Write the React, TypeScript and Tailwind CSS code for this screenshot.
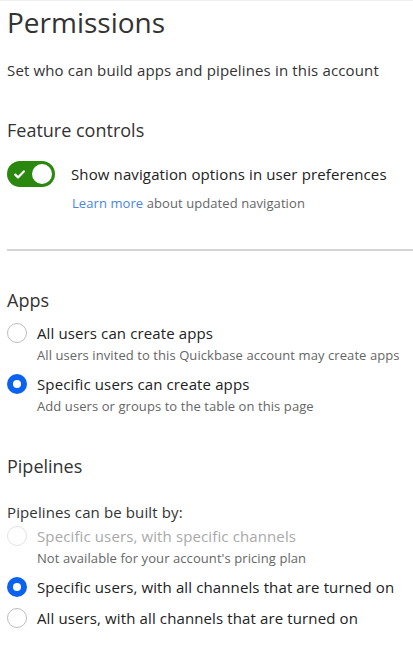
import React from "react";

function Radio({ checked, disabled }: { checked?: boolean; disabled?: boolean }) {
  if (checked) {
    return (
      <span className="flex h-[20px] w-[20px] shrink-0 items-center justify-center rounded-full bg-[#0b62ef]">
        <span className="h-[8px] w-[8px] rounded-full bg-white" />
      </span>
    );
  }
  return (
    <span
      className={
        disabled
          ? "h-[20px] w-[20px] shrink-0 rounded-full border border-[#e3e3e3] bg-white"
          : "h-[20px] w-[20px] shrink-0 rounded-full border border-[#bdbdbd] bg-white"
      }
    />
  );
}

function Option({
  label,
  desc,
  checked,
  disabled,
}: {
  label: string;
  desc?: string;
  checked?: boolean;
  disabled?: boolean;
}) {
  return (
    <div className="flex flex-col">
      <div className="flex h-[20px] items-center gap-[10px]">
        <Radio checked={checked} disabled={disabled} />
        <span
          className={
            disabled
              ? "text-[15px] leading-[20px] tracking-[0.12px] text-[#a9a9a9]"
              : "text-[15px] leading-[20px] tracking-[0.12px] text-[#222]"
          }
        >
          {label}
        </span>
      </div>
      {desc && <div className="mt-[3px] pl-[30px] text-[13px] leading-[18px] tracking-[0.08px] text-[#666]">{desc}</div>}
    </div>
  );
}

export default function App() {
  return (
    <div
      className="h-[658px] w-[413px] overflow-hidden border-t border-[#f0f0f0] bg-white pl-[7px]"
      style={{ fontFamily: "'Open Sans', Lato, sans-serif" }}
    >
      <h1 className="mt-[3px] text-[28px] leading-[36px] text-[#333]">Permissions</h1>
      <p className="mt-[20px] text-[15px] leading-[20px] tracking-[0.15px] text-[#333]">
        Set who can build apps and pipelines in this account
      </p>

      <h2 className="mt-[38px] text-[18px] leading-[24px] text-[#333]">Feature controls</h2>
      <div className="mt-[19px] flex h-[26px] items-center gap-[16px]">
        <span className="flex h-[26px] w-[48px] shrink-0 items-center justify-between rounded-full bg-[#2b880f] pl-[7px] pr-[3px]">
          <svg width="11" height="9" viewBox="0 0 11 9" fill="none">
            <path d="M1.2 4.6 L4 7.4 L9.8 1.4" stroke="white" strokeWidth="2.2" strokeLinecap="round" strokeLinejoin="round" />
          </svg>
          <span className="h-[20px] w-[20px] rounded-full bg-white" />
        </span>
        <span className="text-[15px] leading-[20px] tracking-[0.12px] text-[#222]">Show navigation options in user preferences</span>
      </div>
      <div className="mt-[7px] pl-[65px] text-[13px] leading-[18px] tracking-[0.08px] text-[#666]">
        <span className="text-[#4a86e0]">Learn more</span> about updated navigation
      </div>

      <div className="mt-[37px] h-[2px] bg-[#d5d5d5]" />

      <h2 className="mt-[37px] text-[18px] leading-[24px] text-[#333]">Apps</h2>
      <div className="mt-[11px] flex flex-col gap-[10px]">
        <Option label="All users can create apps" desc="All users invited to this Quickbase account may create apps" />
        <Option label="Specific users can create apps" desc="Add users or groups to the table on this page" checked />
      </div>

      <h2 className="mt-[39px] text-[18px] leading-[24px] text-[#333]">Pipelines</h2>
      <p className="mt-[24px] text-[15px] leading-[20px] tracking-[0.12px] text-[#333]">Pipelines can be built by:</p>
      <div className="mt-[4px] flex flex-col gap-[10px]">
        <Option label="Specific users, with specific channels" desc="Not available for your account's pricing plan" disabled />
        <Option label="Specific users, with all channels that are turned on" checked />
        <div className="mt-[1px]">
          <Option label="All users, with all channels that are turned on" />
        </div>
      </div>
    </div>
  );
}
